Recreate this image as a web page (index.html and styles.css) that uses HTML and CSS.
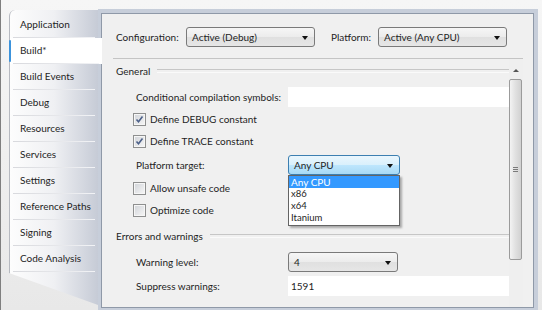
FILE: index.html
```html
<!DOCTYPE html>
<html lang="en">
<head>
  <meta charset="UTF-8" />
  <title>Project Properties - Build</title>
  <link rel="stylesheet" href="styles.css">
</head>
<body>
  <div class="frame">
    <nav class="tabs">
      <div class="tab">Application</div>
      <div class="tab active">Build*</div>
      <div class="tab">Build Events</div>
      <div class="tab">Debug</div>
      <div class="tab">Resources</div>
      <div class="tab">Services</div>
      <div class="tab">Settings</div>
      <div class="tab">Reference Paths</div>
      <div class="tab">Signing</div>
      <div class="tab">Code Analysis</div>
    </nav>

    <div class="page-wrap">
      <div class="page">
        <div class="toolbar">
          <span class="tb-label config">Configuration:</span>
          <div class="combo wide">Active (Debug)</div>
          <span class="tb-label platform">Platform:</span>
          <div class="combo wide">Active (Any CPU)</div>
        </div>

        <div class="body">
          <div class="content">
            <div class="section first">General</div>

            <div class="row gap-4">
              <span class="lbl">Conditional compilation symbols:</span>
              <div class="field"></div>
            </div>
            <div class="row check-row">
              <span class="box checked">
                <svg width="9" height="9" viewBox="0 0 9 9"><path d="M1.5 4.5 L3.5 6.8 L7.5 1.5" fill="none" stroke="#4c6089" stroke-width="1.6"/></svg>
              </span>
              Define DEBUG constant
            </div>
            <div class="row check-row">
              <span class="box checked">
                <svg width="9" height="9" viewBox="0 0 9 9"><path d="M1.5 4.5 L3.5 6.8 L7.5 1.5" fill="none" stroke="#4c6089" stroke-width="1.6"/></svg>
              </span>
              Define TRACE constant
            </div>
            <div class="row gap-2">
              <span class="lbl">Platform target:</span>
              <div class="combo-holder">
                <div class="combo hot target">Any CPU</div>
                <ul class="dropdown">
                  <li class="selected">Any CPU</li>
                  <li>x86</li>
                  <li>x64</li>
                  <li>Itanium</li>
                </ul>
              </div>
            </div>
            <div class="row check-row gap-1">
              <span class="box"></span>
              Allow unsafe code
            </div>
            <div class="row check-row">
              <span class="box"></span>
              Optimize code
            </div>

            <div class="section gap-4">Errors and warnings</div>

            <div class="row gap-4">
              <span class="lbl">Warning level:</span>
              <div class="combo level">4</div>
            </div>
            <div class="row gap-2">
              <span class="lbl">Suppress warnings:</span>
              <div class="field">1591</div>
            </div>
          </div>

          <div class="scrollbar">
            <span class="up"></span>
            <div class="thumb"><span class="grip"></span></div>
          </div>
        </div>
      </div>
    </div>
  </div>
</body>
</html>
```

FILE: styles.css
```css
* { box-sizing: border-box; }

html, body { margin: 0; }

body {
  font-family: Lato, "Segoe UI", sans-serif;
  font-size: 10px;
  color: #1e1e1e;
  background: #ececec;
}

.frame {
  width: 542px;
  height: 310px;
  display: flex;
  padding-left: 8px;
  border-left: 1px solid #7f7f7f;
  background: linear-gradient(#f6f6f6, #e8e8e8);
  overflow: hidden;
  white-space: nowrap;
}

/* left tab strip */
.tabs {
  width: 89px;
  height: 295px;
  margin-top: 10px;
  padding-top: 2px;
  flex-shrink: 0;
  position: relative;
  z-index: 1;
  border-left: 1px solid #b6b9c0;
  border-top-left-radius: 6px;
  background: linear-gradient(to right, #fdfdfd 0%, #eff0f3 50%, #c6cbd6 100%);
  clip-path: polygon(0 0, calc(100% + 4px) 0, calc(100% + 4px) 100%, 100% 100%, 0 263px);
}

.tab {
  height: 26px;
  line-height: 25px;
  padding-left: 10px;
  position: relative;
}
.tab::after {
  content: "";
  position: absolute;
  left: 3px;
  right: 3px;
  bottom: 0;
  height: 1px;
  background: linear-gradient(to right, #d8d9dd, #f2f3f6);
}

.tab.active {
  background: #fff;
  margin-right: -4px;
}
.tab.active::before {
  content: "";
  position: absolute;
  left: -1px;
  top: 2px;
  bottom: 2px;
  width: 2px;
  border-radius: 1px;
  background: #3c93dc;
}

/* property page */
.page-wrap {
  width: 440px;
  height: 301px;
  margin-top: 9px;
  padding: 4px 4px 2px 3px;
  flex-shrink: 0;
  background: #c7ceda;
}

.page {
  height: 295px;
  border: 1px solid #8f99a8;
  background: #f0f0f0;
  display: flex;
  flex-direction: column;
}

.toolbar {
  display: flex;
  align-items: center;
  height: 45px;
  margin: 0 10px 0 11px;
  padding: 13px 0 11px 3px;
  border-bottom: 1px solid #c4c4c4;
}
.tb-label.config { width: 70px; }
.tb-label.platform { width: 47px; margin-left: 16px; }

.combo {
  height: 20px;
  line-height: 18px;
  padding-left: 5px;
  position: relative;
  border: 1px solid #7a7a7a;
  border-radius: 3px;
  background: linear-gradient(#f6f6f6, #ececec 50%, #e0e0e0 51%, #e6e6e6);
}
.combo::after {
  content: "";
  position: absolute;
  right: 6px;
  top: 8px;
  border-left: 3.5px solid transparent;
  border-right: 3.5px solid transparent;
  border-top: 4px solid #111;
}
.combo.wide { width: 129px; }
.combo.level { width: 110px; }
.combo.target { width: 112px; }
.combo.hot {
  border-color: #3c7fb1;
  background: linear-gradient(#eaf6fd, #d9f0fc 50%, #bee6fd 51%, #a7d9f5);
}

.body {
  flex: 1;
  display: flex;
  min-height: 0;
  margin-right: 10px;
  overflow: hidden;
}

.content {
  flex: 1;
  padding-left: 14px;
}

.section {
  display: flex;
  align-items: center;
  gap: 7px;
  height: 22px;
}
.section::after {
  content: "";
  flex: 1;
  height: 2px;
  border-top: 1px solid #c6c6c6;
  border-bottom: 1px solid #fafafa;
}
.section.first { margin-top: 1px; }

.row {
  display: flex;
  align-items: center;
  height: 22px;
  padding-left: 20px;
}
.lbl { width: 152px; }

.gap-1 { margin-top: 1px; }
.gap-2 { margin-top: 2px; }
.gap-4 { margin-top: 4px; }

.field {
  flex: 1;
  height: 20px;
  line-height: 20px;
  padding-left: 3px;
  background: #fff;
}

.check-row {
  padding-left: 17px;
  gap: 4px;
}
.box {
  width: 13px;
  height: 13px;
  display: flex;
  align-items: center;
  justify-content: center;
  border: 1px solid #8e8f8f;
  background: linear-gradient(135deg, #d0d3d8, #f7f7f7);
  box-shadow: inset 0 0 0 1px #f6f6f6;
}

.combo-holder { position: relative; }

.dropdown {
  position: absolute;
  top: 20px;
  left: 0;
  width: 112px;
  margin: 0;
  padding: 0 0 1px;
  list-style: none;
  border: 1px solid #646464;
  background: #fff;
  box-shadow: 2px 2px 2px rgba(0, 0, 0, 0.3);
  z-index: 2;
}
.dropdown li {
  height: 12px;
  line-height: 12px;
  padding-left: 2px;
  font-size: 9.5px;
}
.dropdown li.selected {
  background: #3399ff;
  color: #fff;
  font-size: 10px;
}

/* vertical scrollbar */
.scrollbar {
  width: 14px;
  position: relative;
  background: #efefef;
}
.up {
  position: absolute;
  left: 4px;
  top: 10px;
  border-left: 3px solid transparent;
  border-right: 3px solid transparent;
  border-bottom: 3px solid #555;
}
.thumb {
  margin-top: 20px;
  width: 13px;
  height: 181px;
  display: flex;
  align-items: center;
  justify-content: center;
  border: 1px solid #9b9b9b;
  border-radius: 2px;
  background: linear-gradient(to right, #f3f3f3, #e2e2e2 45%, #d1d1d1);
}
.grip {
  width: 5px;
  height: 5px;
  border-top: 1px solid #7a7a7a;
  border-bottom: 1px solid #7a7a7a;
  background: linear-gradient(#7a7a7a, #7a7a7a) center / 5px 1px no-repeat;
}
```
